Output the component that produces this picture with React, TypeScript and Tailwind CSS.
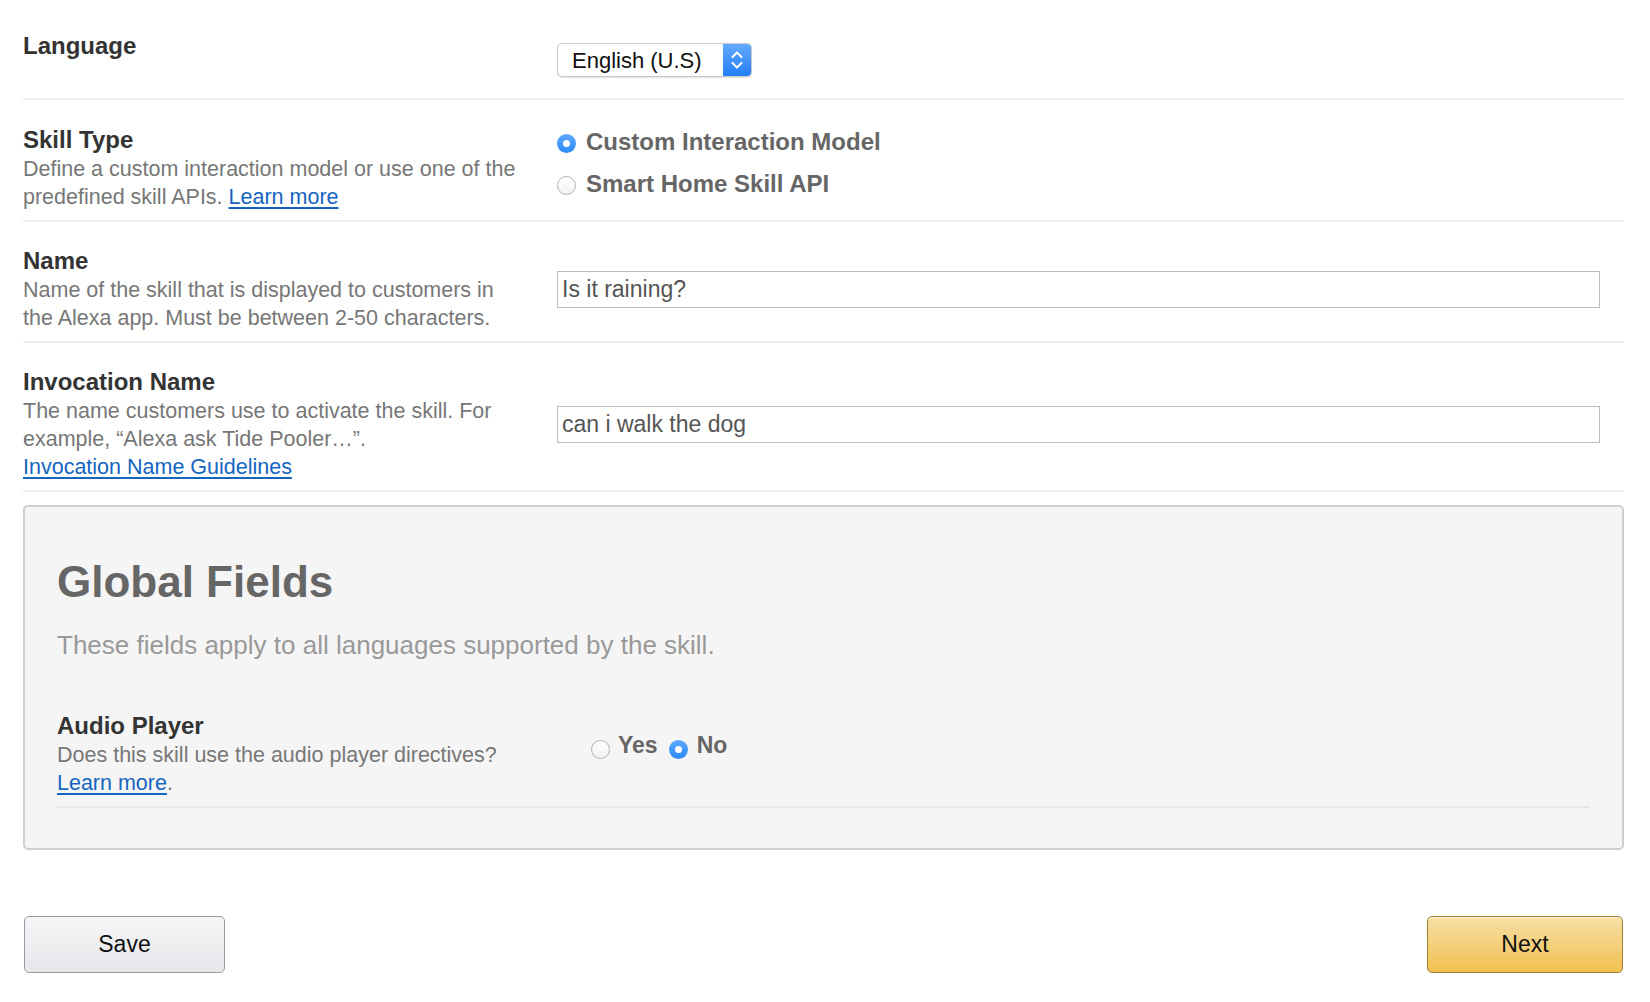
import React from "react";

function Radio({ checked }: { checked?: boolean }) {
    return checked ? (
        <span className="flex h-[19px] w-[19px] shrink-0 items-center justify-center rounded-full bg-linear-to-b from-[#5aa9ff] to-[#2b8af7]">
            <span className="h-[7px] w-[7px] rounded-full bg-white" />
        </span>
    ) : (
        <span className="block h-[19px] w-[19px] shrink-0 rounded-full border border-[#b3b3b3] bg-linear-to-b from-white to-[#f1f1f1]" />
    );
}

function Field({ value }: { value: string }) {
    return (
        <div className="flex h-[37px] items-center border border-[#bdbdbd] bg-white px-[4px] text-[23px] text-[#555]">
            {value}
        </div>
    );
}

export default function App() {
    const row = "grid grid-cols-[534px_1fr] border-b-2 border-[#eeeeee]";
    const title = "text-[24px] font-bold leading-[28px] text-[#333]";
    const desc = "pr-[34px] pt-[1px] text-[21.5px] leading-[28px] text-[#777]";
    const link = "text-[#1565c0] underline underline-offset-[3px]";

    return (
        <div className="min-h-screen bg-white pl-[23px] pr-[26px] font-['Liberation_Sans',Arial,Helvetica,sans-serif]">
            {/* LANGUAGE */}
            <div className={`${row} pt-[32px] pb-[21px]`}>
                <div className={title}>Language</div>
                <div className="mt-[11px]">
                    <div className="flex h-[34px] w-[195px] overflow-hidden rounded-[5px] border border-[#c9c9c9] bg-white shadow-[0_1px_1px_rgba(0,0,0,0.12)]">
                        <div className="flex flex-1 items-center pl-[14px] text-[22px] text-[#111]">
                            English (U.S)
                        </div>
                        <div className="flex w-[28px] items-center justify-center bg-linear-to-b from-[#62aaff] to-[#1f7ef7]">
                            <svg width="14" height="24" viewBox="0 0 14 24" fill="none" stroke="white" strokeWidth="2" strokeLinecap="round" strokeLinejoin="round">
                                <path d="M2.5 9 L7 4.5 L11.5 9" />
                                <path d="M2.5 15 L7 19.5 L11.5 15" />
                            </svg>
                        </div>
                    </div>
                </div>
            </div>

            {/* SKILL TYPE */}
            <div className={`${row} pt-[26px] pb-[9px]`}>
                <div>
                    <div className={title}>Skill Type</div>
                    <div className={desc}>
                        Define a custom interaction model or use one of the predefined skill APIs.{" "}
                        <a className={link}>Learn more</a>
                    </div>
                </div>
                <div className="flex flex-col gap-[10px]">
                    {[
                        { label: "Custom Interaction Model", checked: true },
                        { label: "Smart Home Skill API", checked: false },
                    ].map((o) => (
                        <div key={o.label} className="flex h-[32px] items-start gap-[10px]">
                            <span className="mt-[8px]">
                                <Radio checked={o.checked} />
                            </span>
                            <span className="text-[24px] font-bold leading-[32px] text-[#666]">{o.label}</span>
                        </div>
                    ))}
                </div>
            </div>

            {/* NAME */}
            <div className={`${row} items-center pt-[25px] pb-[9px]`}>
                <div>
                    <div className={title}>Name</div>
                    <div className={desc}>
                        Name of the skill that is displayed to customers in the Alexa app. Must be between 2-50 characters.
                    </div>
                </div>
                <div className="pr-[24px]">
                    <Field value="Is it raining?" />
                </div>
            </div>

            {/* INVOCATION NAME */}
            <div className={`${row} items-center pt-[25px] pb-[9px]`}>
                <div>
                    <div className={title}>Invocation Name</div>
                    <div className={desc}>
                        The name customers use to activate the skill. For example, “Alexa ask Tide Pooler…”.
                    </div>
                    <a className={`${link} block text-[21.5px] leading-[28px]`}>Invocation Name Guidelines</a>
                </div>
                <div className="pr-[24px]">
                    <Field value="can i walk the dog" />
                </div>
            </div>

            {/* GLOBAL FIELDS */}
            <div className="mt-[13px] rounded-[5px] border-2 border-[#cfcfcf] bg-[#f5f5f5] px-[32px] pt-[51px] pb-[40px]">
                <h2 className="text-[44px] font-bold leading-[48px] text-[#666]">Global Fields</h2>
                <p className="mt-[23px] text-[26px] leading-[32px] text-[#999]">
                    These fields apply to all languages supported by the skill.
                </p>
                <div className="mt-[26px] grid grid-cols-[534px_1fr] border-b-2 border-[#e8e8e8] pt-[25px] pb-[9px]">
                    <div>
                        <div className={title}>Audio Player</div>
                        <div className={desc}>Does this skill use the audio player directives?</div>
                        <div className="text-[21.5px] leading-[28px] text-[#777]">
                            <a className={link}>Learn more</a>.
                        </div>
                    </div>
                    <div className="mt-[19px] flex items-start">
                        <span className="mt-[9px]">
                            <Radio />
                        </span>
                        <span className="ml-[8px] text-[23px] font-bold leading-[28px] text-[#666]">Yes</span>
                        <span className="ml-[11px] mt-[9px]">
                            <Radio checked />
                        </span>
                        <span className="ml-[9px] text-[23px] font-bold leading-[28px] text-[#666]">No</span>
                    </div>
                </div>
            </div>

            {/* BUTTONS */}
            <div className="mt-[66px] flex justify-between pl-[1px] pr-[1px]">
                <button className="h-[57px] w-[201px] rounded-[5px] border border-[#9a9ba0] bg-linear-to-b from-[#f6f6f8] to-[#e6e7ea] text-[23px] text-[#111]">
                    Save
                </button>
                <button className="h-[57px] w-[196px] rounded-[5px] border border-[#9c7e31] bg-linear-to-b from-[#f7dfa5] to-[#f0c14b] text-[23px] text-[#111] shadow-[inset_0_1px_0_rgba(255,255,255,0.6)]">
                    Next
                </button>
            </div>
        </div>
    );
}
